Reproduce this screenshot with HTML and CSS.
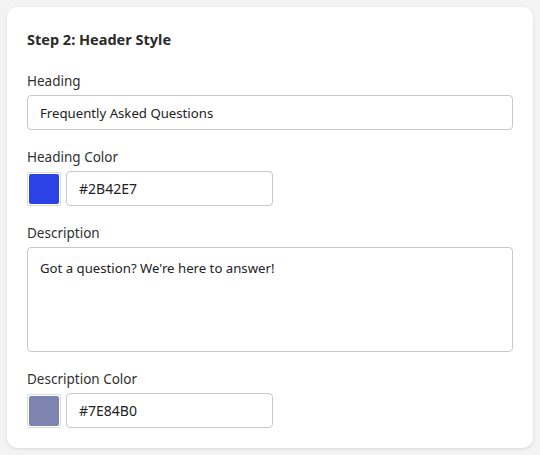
FILE: index.html
```html
<!DOCTYPE html>
<html lang="en">
<head>
<meta charset="utf-8">
<title>Header Style</title>
<link rel="stylesheet" href="styles.css">
</head>
<body>
<div class="card">
  <h2 class="title">Step 2: Header Style</h2>
  <div class="field">
    <label class="label">Heading</label>
    <input class="input" type="text" value="Frequently Asked Questions">
  </div>
  <div class="field">
    <label class="label">Heading Color</label>
    <div class="color-row">
      <span class="swatch"><span class="swatch-fill blue"></span></span>
      <input class="input hex" type="text" value="#2B42E7">
    </div>
  </div>
  <div class="field">
    <label class="label">Description</label>
    <textarea class="input area">Got a question? We're here to answer!</textarea>
  </div>
  <div class="field">
    <label class="label">Description Color</label>
    <div class="color-row">
      <span class="swatch"><span class="swatch-fill gray"></span></span>
      <input class="input hex" type="text" value="#7E84B0">
    </div>
  </div>
</div>
</body>
</html>
```
FILE: styles.css
```css
* { box-sizing: border-box; }
html, body { margin: 0; }
body {
  background: #f3f3f3;
  padding: 7px;
  font-family: "Noto Sans", "Open Sans", sans-serif;
  color: #2b2b2b;
}
.card {
  width: 526px;
  height: 441px;
  background: #fff;
  border-radius: 10px;
  box-shadow: 0 1px 3px rgba(0,0,0,0.12);
  padding: 22px 20px 20px 20px;
}
.title {
  margin: 0;
  font-size: 14.5px;
  font-weight: 700;
  line-height: 20px;
  color: #2a2a2a;
}
.field { margin-top: 17px; }
.field:first-of-type { margin-top: 22px; }
.label {
  display: block;
  font-size: 13.5px;
  line-height: 20px;
  margin-bottom: 4px;
  color: #303030;
}
.input {
  display: block;
  width: 486px;
  height: 35px;
  border: 1px solid #c6c8cc;
  border-radius: 4px;
  padding: 0 12px;
  font-family: inherit;
  font-size: 13.2px;
  color: #222;
  background: #fff;
  outline: none;
}
.area {
  height: 105px;
  padding: 10px 12px;
  resize: none;
  line-height: 20px;
}
.color-row {
  display: flex;
  align-items: flex-end;
  gap: 5px;
}
.hex {
  width: 207px;
  font-size: 14px;
}
.swatch {
  width: 34px;
  height: 34px;
  border: 1px solid #dcdcdc;
  border-radius: 2px;
  padding: 1px;
  display: block;
}
.swatch-fill {
  display: block;
  width: 100%;
  height: 100%;
  border-radius: 2px;
}
.blue { background: #2b42e7; }
.gray { background: #7e84b0; }
```
